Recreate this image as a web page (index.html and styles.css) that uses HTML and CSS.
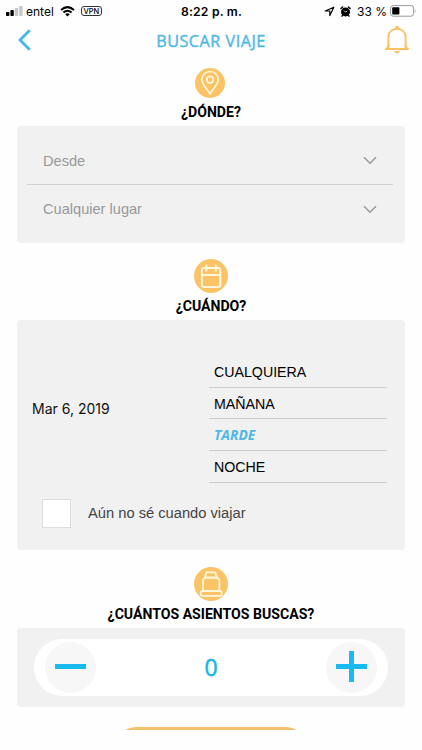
FILE: index.html
```html
<!DOCTYPE html>
<html lang="es">
<head>
    <meta charset="UTF-8">
    <meta name="viewport" content="width=device-width, initial-scale=1.0">
    <title>Buscar viaje</title>
    <link rel="stylesheet" href="styles.css">
</head>
<body>
    <!-- Barra de estado -->
    <div class="status-bar">
        <div class="status-left">
            <svg class="signal" width="17" height="10" viewBox="0 0 17 10">
                <rect x="0" y="6" width="3.4" height="4" rx="0.8"/>
                <rect x="4.4" y="4" width="3.4" height="6" rx="0.8"/>
                <rect class="off" x="8.8" y="2" width="3.4" height="8" rx="0.8"/>
                <rect class="off" x="13.2" y="0" width="3.4" height="10" rx="0.8"/>
            </svg>
            <span class="carrier">entel</span>
            <svg class="wifi" width="15" height="11" viewBox="0 0 15 11" fill="none" stroke="#000" stroke-width="2">
                <path d="M1 4.1Q7.5-1.8 14 4.1"/>
                <path d="M3.4 6.6Q7.5 3 11.6 6.6"/>
                <path d="M5.2 8.2Q7.5 6.4 9.8 8.2L7.5 10.6Z" fill="#000" stroke="none"/>
            </svg>
            <span class="vpn">VPN</span>
        </div>
        <div class="status-time">8:22 p. m.</div>
        <div class="status-right">
            <svg class="location" width="11" height="11" viewBox="0 0 11 11" fill="none" stroke="#000" stroke-width="1.2" stroke-linejoin="round">
                <path d="M9.8 1.2L1.2 5H5.8V9.6Z"/>
            </svg>
            <svg class="alarm" width="11" height="11" viewBox="0 0 11 11">
                <circle cx="5.5" cy="5.9" r="4.5"/>
                <path d="M0.9 2.6L2.6 1M10.1 2.6L8.4 1M2.8 9L2 10.2M8.2 9L9 10.2" stroke="#000" stroke-width="1.4" stroke-linecap="round"/>
                <path d="M4 4.6L5.5 6.1L7.2 5" stroke="#fff" stroke-width="0.8" fill="none"/>
            </svg>
            <span class="percent">33 %</span>
            <svg class="battery" width="27" height="12" viewBox="0 0 27 12">
                <rect x="0.6" y="0.6" width="23" height="10.6" rx="2.5" fill="#fff" stroke="#999" stroke-width="1"/>
                <rect x="2.2" y="2.2" width="7.2" height="7.4" rx="0.8"/>
                <path d="M24.8 4V8Q26.3 6 24.8 4Z" fill="#999"/>
            </svg>
        </div>
    </div>

    <!-- Cabecera -->
    <header class="nav-bar">
        <svg class="back" width="14" height="22" viewBox="0 0 14 22" fill="none" stroke="#4fb8e4" stroke-width="3">
            <path d="M12.8 1.3L3.1 11L12.8 20.7"/>
        </svg>
        <h1>BUSCAR VIAJE</h1>
        <svg class="bell" width="26" height="30" viewBox="0 0 26 30" fill="none" stroke="#fcc062" stroke-width="1.9">
            <path d="M1.2 24H24.8M4.4 23.5V12.5C4.4 7.2 7.8 3.7 13 3.7S21.6 7.2 21.6 12.5V23.5"/>
            <path d="M2.7 23.5Q4.4 22.5 4.4 20M23.3 23.5Q21.6 22.5 21.6 20"/>
            <circle cx="13" cy="2.5" r="1.8" fill="#fcc062" stroke="none"/>
            <path d="M10 26H16Q15.6 28.4 13 28.4T10 26Z" fill="#fcc062" stroke="none"/>
        </svg>
    </header>

    <main>
        <!-- Origen y destino -->
        <section class="where">
            <svg class="badge" width="30" height="30" viewBox="0 0 30 30" fill="none" stroke="#fff7dc" stroke-width="1.7">
                <circle cx="15" cy="15" r="15" fill="#fcc366" stroke="none"/>
                <path d="M15 25.7C12.5 21.5 6.8 16.2 6.8 11.7A8.2 8.2 0 0 1 23.2 11.7C23.2 16.2 17.5 21.5 15 25.7Z"/>
                <circle cx="15" cy="11.7" r="3.3"/>
            </svg>
            <h2>¿DÓNDE?</h2>
            <div class="card places">
                <div class="place">
                    <span>Desde</span>
                    <svg width="14" height="9" viewBox="0 0 14 9"><path d="M1 1.3L7 7.2L13 1.3"/></svg>
                </div>
                <div class="place">
                    <span>Cualquier lugar</span>
                    <svg width="14" height="9" viewBox="0 0 14 9"><path d="M1 1.3L7 7.2L13 1.3"/></svg>
                </div>
            </div>
        </section>

        <!-- Fecha y horario -->
        <section class="when">
            <svg class="badge" width="34" height="34" viewBox="0 0 34 34" fill="none" stroke="#fff7dc" stroke-width="2">
                <circle cx="17" cy="17" r="17" fill="#fcc366" stroke="none"/>
                <rect x="7.9" y="9" width="18.4" height="19" rx="2.2"/>
                <path d="M8 16H26M12.3 5.8V12.5M21.8 5.8V12.5"/>
            </svg>
            <h2>¿CUÁNDO?</h2>
            <div class="card schedule">
                <div class="schedule-row">
                    <span class="date">Mar 6, 2019</span>
                    <ul class="periods">
                        <li>CUALQUIERA</li>
                        <li>MAÑANA</li>
                        <li class="selected">TARDE</li>
                        <li>NOCHE</li>
                    </ul>
                </div>
                <label class="unknown">
                    <input type="checkbox">
                    <span>Aún no sé cuando viajar</span>
                </label>
            </div>
        </section>

        <!-- Asientos -->
        <section class="seats">
            <svg class="badge" width="34" height="34" viewBox="0 0 34 34" fill="none" stroke="#fff7dc" stroke-width="1.8" stroke-linejoin="round">
                <circle cx="17" cy="17" r="17" fill="#fcc366" stroke="none"/>
                <path d="M12.5 5.3H21.3L22.8 10.3H11Z"/>
                <path d="M9 24V13.5Q9 10.8 12 10.8H22Q25.3 10.8 25.3 13.5V24"/>
                <rect x="6.7" y="24" width="21" height="4.8" rx="1.8"/>
            </svg>
            <h2>¿CUÁNTOS ASIENTOS BUSCAS?</h2>
            <div class="card counter-card">
                <div class="counter">
                    <button type="button" aria-label="Menos">
                        <svg width="31" height="31" viewBox="0 0 31 31"><path d="M0 15.5H31"/></svg>
                    </button>
                    <span class="count">0</span>
                    <button type="button" aria-label="Más">
                        <svg width="31" height="31" viewBox="0 0 31 31"><path d="M0 15.5H31M15.5 0V31"/></svg>
                    </button>
                </div>
            </div>
        </section>
    </main>

    <!-- Borde superior del botón, el resto queda fuera de la vista -->
    <div class="submit-peek">
        <div class="submit"></div>
    </div>
</body>
</html>
```

FILE: styles.css
```css
* {
    box-sizing: border-box;
}
body {
    margin: 0;
    width: 422px;
    height: 750px;
    overflow: hidden;
    background-color: #fefefe;
    font-family: "Liberation Sans", Arial, sans-serif;
    color: #111;
}
svg {
    display: block;
    flex: none;
}

/* Barra de estado */
.status-bar {
    display: grid;
    grid-template-columns: 1fr auto 1fr;
    align-items: center;
    height: 22px;
    padding: 0 5px 0 6px;
    font-family: Inter, sans-serif;
    font-size: 12px;
    color: #000;
}
.status-left,
.status-right {
    display: flex;
    align-items: center;
}
.status-right {
    justify-content: flex-end;
}
.signal .off {
    fill: #c6c6c6;
}
.carrier {
    margin-left: 3px;
    font-size: 12px;
}
.wifi {
    margin-left: 6px;
}
.vpn {
    margin-left: 6px;
    width: 21px;
    height: 10px;
    border: 1px solid #333;
    border-radius: 3px;
    font-size: 7.5px;
    font-weight: 500;
    line-height: 9px;
    text-align: center;
}
.status-time {
    font-size: 12.2px;
    font-weight: 600;
    letter-spacing: 0.2px;
}
.alarm {
    margin-left: 5px;
}
.percent {
    margin: 0 3px 0 6px;
    white-space: nowrap;
}

/* Cabecera */
.nav-bar {
    display: flex;
    align-items: center;
    justify-content: space-between;
    height: 36px;
    padding: 0 12px 0 17px;
}
.nav-bar h1 {
    margin: 1px 0 0 7px;
    font-family: "Open Sans", sans-serif;
    font-size: 16.2px;
    font-weight: 400;
    letter-spacing: 0.5px;
    color: #4fb8e4;
    -webkit-text-stroke: 0.4px #4fb8e4;
}

/* Secciones */
main {
    padding: 0 17px;
}
section {
    display: flex;
    flex-direction: column;
    align-items: center;
}
.where {
    padding-top: 9.5px;
}
.where .badge {
    margin-right: 2px;
}
.when {
    padding-top: 16.5px;
}
.seats {
    padding-top: 16.5px;
}
section h2 {
    margin: 4px 0 5px;
    font-family: Roboto, sans-serif;
    font-size: 14.1px;
    font-weight: 700;
    line-height: 18px;
    color: #000;
}
.where h2 {
    margin-top: 5px;
}
.card {
    width: 388px;
    border-radius: 4px;
    background-color: #f1f1f1;
}

/* Selectores de lugar */
.places {
    height: 117px;
    padding: 11px 12px 0 10px;
}
.place {
    display: flex;
    align-items: center;
    justify-content: space-between;
    height: 48px;
    padding: 1px 16px 0;
    font-size: 14.6px;
    color: #999;
}
.place:first-child {
    border-bottom: 1px solid #d2d2d2;
}
.place svg {
    fill: none;
    stroke: #999;
    stroke-width: 1.6;
}

/* Horario */
.schedule {
    height: 230px;
    padding: 36px 18px 0 15px;
}
.schedule-row {
    display: flex;
    align-items: center;
    justify-content: space-between;
}
.date {
    margin-bottom: 21px;
    font-family: Inter, sans-serif;
    font-size: 14px;
}
.periods {
    width: 178px;
    margin: 0;
    padding: 0;
    list-style: none;
    font-size: 14.2px;
    color: #000;
}
.periods li {
    height: 31.7px;
    padding-left: 5px;
    border-bottom: 1px solid #ccc;
    line-height: 32px;
}
.periods .selected {
    font-family: "Open Sans", sans-serif;
    font-size: 13.8px;
    font-style: italic;
    font-weight: 700;
    color: #4fb8e4;
}
.unknown {
    display: flex;
    align-items: center;
    margin: 16px 0 0 10px;
    font-size: 14.7px;
    color: #444;
}
.unknown input {
    appearance: none;
    width: 29px;
    height: 29px;
    margin: 0 17px 0 0;
    border: 1px solid #ddd;
    background-color: #fff;
}

/* Contador de asientos */
.counter-card {
    height: 79.5px;
    padding: 11.5px 17px 0;
}
.counter {
    display: flex;
    align-items: center;
    justify-content: space-between;
    height: 57px;
    padding: 0 11px;
    border-radius: 29px;
    background-color: #fff;
}
.counter button {
    display: flex;
    align-items: center;
    justify-content: center;
    width: 51px;
    height: 51px;
    padding: 0 0 2px;
    border: none;
    border-radius: 50%;
    background-color: #f7f7f7;
}
.counter button svg {
    fill: none;
    stroke: #18baf0;
    stroke-width: 5;
}
.count {
    margin-bottom: 2px;
    font-family: "Open Sans", sans-serif;
    font-size: 23px;
    color: #18b4e8;
    -webkit-text-stroke: 0.5px #18b4e8;
}

/* Botón de búsqueda */
.submit-peek {
    height: 2.5px;
    margin-top: 20px;
    overflow: hidden;
}
.submit {
    width: 190px;
    height: 40px;
    margin: 0 auto;
    border-radius: 20px;
    background-color: #f5c170;
}
```
